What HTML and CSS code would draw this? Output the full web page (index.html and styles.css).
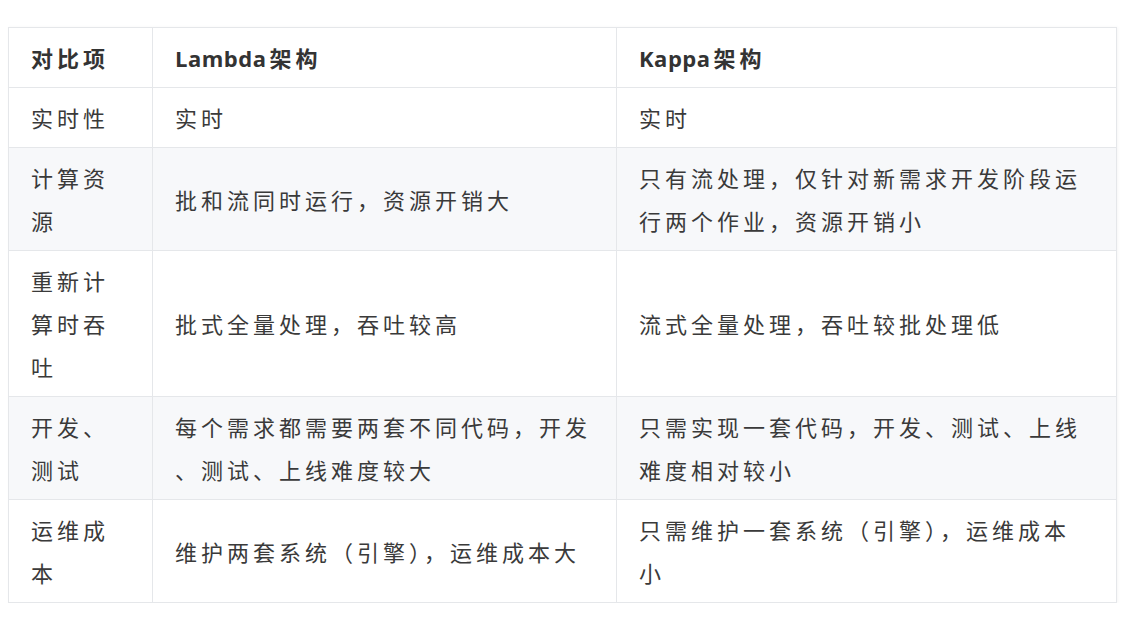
FILE: index.html
```html
<!DOCTYPE html>
<html lang="zh-CN">
<head>
<meta charset="utf-8">
<title>Lambda vs Kappa</title>
<link rel="stylesheet" href="styles.css">
</head>
<body>
<table class="cmp">
  <colgroup>
    <col class="c1">
    <col class="c2">
    <col class="c3">
  </colgroup>
  <thead>
    <tr>
      <th>对比项</th>
      <th><span class="latin">Lambda</span>架构</th>
      <th><span class="latin">Kappa</span>架构</th>
    </tr>
  </thead>
  <tbody>
    <tr>
      <td>实时性</td>
      <td>实时</td>
      <td>实时</td>
    </tr>
    <tr class="alt">
      <td>计算资<br>源</td>
      <td>批和流同时运行，资源开销大</td>
      <td>只有流处理，仅针对新需求开发阶段运<br>行两个作业，资源开销小</td>
    </tr>
    <tr>
      <td>重新计<br>算时吞<br>吐</td>
      <td>批式全量处理，吞吐较高</td>
      <td>流式全量处理，吞吐较批处理低</td>
    </tr>
    <tr class="alt">
      <td>开发、<br>测试</td>
      <td>每个需求都需要两套不同代码，开发<br>、测试、上线难度较大</td>
      <td>只需实现一套代码，开发、测试、上线<br>难度相对较小</td>
    </tr>
    <tr>
      <td>运维成<br>本</td>
      <td>维护两套系统（引擎），运维成本大</td>
      <td>只需维护一套系统（引擎），运维成本<br>小</td>
    </tr>
  </tbody>
</table>
</body>
</html>
```

FILE: styles.css
```css
html, body {
  background: #ffffff;
}
body {
  margin: 0;
  padding: 27px 0 0 8px;
  font-family: "Noto Sans CJK SC", "Noto Sans", sans-serif;
}
.cmp {
  border-collapse: collapse;
  table-layout: fixed;
  width: 1108px;
  box-shadow: 1px 0 3px rgba(0, 0, 0, 0.04);
}
.cmp .c1 { width: 144px; }
.cmp .c2 { width: 464px; }
.cmp .c3 { width: 500px; }
.cmp th,
.cmp td {
  border: 1px solid #e5e7ea;
  padding: 8px 10px 8px 22px;
  font-size: 22px;
  line-height: 43px;
  letter-spacing: 4px;
  color: #3a3a3a;
  text-align: left;
  vertical-align: middle;
  white-space: nowrap;
  overflow: hidden;
}
.cmp th {
  font-weight: 700;
  color: #333333;
  background: #ffffff;
}
.cmp .latin {
  font-family: "Open Sans", "Noto Sans", sans-serif;
  letter-spacing: 0.5px;
  line-height: 1;
  margin-right: 3px;
}
.cmp td {
  font-weight: 400;
}
.cmp tr.alt td {
  background: #f7f8fa;
}
```
